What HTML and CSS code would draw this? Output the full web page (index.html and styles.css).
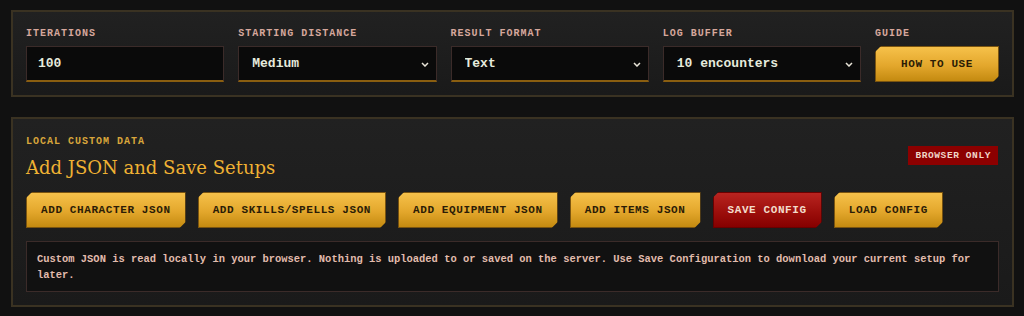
FILE: index.html
```html
<!DOCTYPE html>
<html>
<head>
  <title>Simulator Settings</title>
  <link rel="stylesheet" href="styles.css">
</head>
<body>

<div class="page">
  <section class="panel">
    <div class="controls">
      <div class="field">
        <label class="field-label">Iterations</label>
        <input class="input" type="text" value="100">
      </div>
      <div class="field">
        <label class="field-label">Starting Distance</label>
        <div class="select-wrap">
          <select class="input select">
            <option>Medium</option>
          </select>
          <svg class="chevron" width="8" height="5" viewBox="0 0 8 5"><path d="M1 1l3 3 3-3" fill="none" stroke="#e8e4d8" stroke-width="1.5"/></svg>
        </div>
      </div>
      <div class="field">
        <label class="field-label">Result Format</label>
        <div class="select-wrap">
          <select class="input select">
            <option>Text</option>
          </select>
          <svg class="chevron" width="8" height="5" viewBox="0 0 8 5"><path d="M1 1l3 3 3-3" fill="none" stroke="#e8e4d8" stroke-width="1.5"/></svg>
        </div>
      </div>
      <div class="field">
        <label class="field-label">Log Buffer</label>
        <div class="select-wrap">
          <select class="input select">
            <option>10 encounters</option>
          </select>
          <svg class="chevron" width="8" height="5" viewBox="0 0 8 5"><path d="M1 1l3 3 3-3" fill="none" stroke="#e8e4d8" stroke-width="1.5"/></svg>
        </div>
      </div>
      <div class="field">
        <label class="field-label">Guide</label>
        <button class="btn btn-gold">How to use</button>
      </div>
    </div>
  </section>

  <section class="panel">
    <div class="panel-head">
      <div>
        <div class="eyebrow">Local Custom Data</div>
        <h2 class="title">Add JSON and Save Setups</h2>
      </div>
      <span class="badge">Browser only</span>
    </div>

    <div class="actions">
      <button class="btn btn-gold">Add character JSON</button>
      <button class="btn btn-gold">Add skills/spells JSON</button>
      <button class="btn btn-gold">Add equipment JSON</button>
      <button class="btn btn-gold">Add items JSON</button>
      <button class="btn btn-red">Save config</button>
      <button class="btn btn-gold">Load config</button>
    </div>

    <p class="note">
      Custom JSON is read locally in your browser. Nothing is uploaded to or saved on the server. Use Save Configuration to download your current setup for later.
    </p>
  </section>
</div>

</body>
</html>
```

FILE: styles.css
```css
* {
  box-sizing: border-box;
}
body {
  margin: 0;
  background: #111111;
  font-family: "Liberation Mono", "DejaVu Sans Mono", monospace;
}
.page {
  padding: 10px 10px 10px 11px;
  display: flex;
  flex-direction: column;
  gap: 20px;
}
.panel {
  border: 2px solid #3a3222;
  background: linear-gradient(180deg, #212121 0%, #1a1a1a 100%);
  padding: 14px 13px 13px 13px;
}
.controls {
  display: grid;
  grid-template-columns: repeat(4, 1fr) 124px;
  gap: 14px;
}
.field {
  display: flex;
  flex-direction: column;
}
.field-label {
  font-size: 10px;
  font-weight: bold;
  letter-spacing: 1px;
  text-transform: uppercase;
  color: #d6a79c;
  height: 12px;
  line-height: 12px;
  margin: 2px 0 6px;
}
.input {
  width: 100%;
  height: 36px;
  background: #0a0a0a;
  border: 1px solid #3b2b29;
  border-bottom: 2px solid #8a5e10;
  color: #e6ebdd;
  font-family: "Liberation Mono", "DejaVu Sans Mono", monospace;
  font-size: 13px;
  font-weight: bold;
  padding: 0 11px;
  outline: none;
}
.select-wrap {
  position: relative;
}
.select {
  appearance: none;
  -webkit-appearance: none;
  padding-left: 13px;
}
.chevron {
  position: absolute;
  right: 8px;
  top: 16px;
  pointer-events: none;
}
.btn {
  height: 36px;
  border: 1px solid #7a5410;
  font-family: "Liberation Mono", "DejaVu Sans Mono", monospace;
  font-size: 11px;
  font-weight: bold;
  letter-spacing: 0.6px;
  text-transform: uppercase;
  padding: 0 14px;
  cursor: pointer;
  clip-path: polygon(6px 0, 100% 0, 100% calc(100% - 6px), calc(100% - 6px) 100%, 0 100%, 0 6px);
}
.btn-gold {
  background: linear-gradient(180deg, #f6c14a 0%, #e3a72c 55%, #c48a10 100%);
  color: #2b1c06;
}
.btn-red {
  background: linear-gradient(180deg, #b82420 0%, #9a0d0a 60%, #860000 100%);
  border-color: #6a0000;
  color: #f3dccb;
}
.panel-head {
  display: flex;
  justify-content: space-between;
  align-items: center;
}
.eyebrow {
  font-size: 10px;
  font-weight: bold;
  letter-spacing: 1px;
  text-transform: uppercase;
  color: #d9a63b;
  line-height: 12px;
  margin-top: 3px;
}
.title {
  margin: 7px 0 0;
  font-family: "DejaVu Serif", "Liberation Serif", serif;
  font-weight: normal;
  font-size: 18px;
  line-height: 26px;
  color: #f0b233;
}
.badge {
  background: #8c0000;
  color: #f0d6c8;
  font-size: 9.5px;
  font-weight: bold;
  letter-spacing: 0.6px;
  text-transform: uppercase;
  padding: 4px 7px;
  line-height: 11px;
  margin: 0 1px 4px 0;
}
.actions {
  display: flex;
  gap: 12px;
  margin-top: 11px;
}
.note {
  margin: 13px 0 0;
  background: #111111;
  border: 1px solid #3b2b29;
  color: #e2bcad;
  font-size: 10.45px;
  font-weight: bold;
  line-height: 16px;
  padding: 9px 10px 8px;
}
```
